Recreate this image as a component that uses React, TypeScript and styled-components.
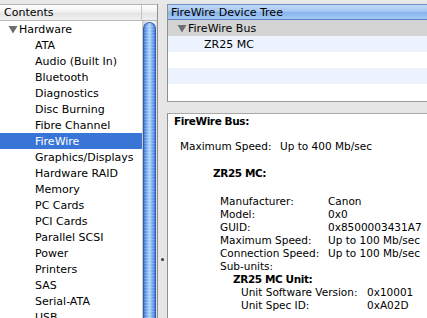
import styled, { createGlobalStyle } from "styled-components";

const GlobalStyle = createGlobalStyle`
    html, body {
        margin : 0;
        padding : 0;
        background : #e8e8e8;
        overflow : hidden;
    }
    body {
        font-family : 'DejaVu Sans', 'Liberation Sans', sans-serif;
        font-size : 11px;
        color : #000;
    }
`

const hardware = [
    'ATA', 'Audio (Built In)', 'Bluetooth', 'Diagnostics', 'Disc Burning',
    'Fibre Channel', 'FireWire', 'Graphics/Displays', 'Hardware RAID', 'Memory',
    'PC Cards', 'PCI Cards', 'Parallel SCSI', 'Power', 'Printers', 'SAS',
    'Serial-ATA', 'USB',
];

const deviceFields = [
    ['Manufacturer:', 'Canon'],
    ['Model:', '0x0'],
    ['GUID:', '0x8500003431A7'],
    ['Maximum Speed:', 'Up to 100 Mb/sec'],
    ['Connection Speed:', 'Up to 100 Mb/sec'],
];

const unitFields = [
    ['Unit Software Version:', '0x10001'],
    ['Unit Spec ID:', '0xA02D'],
];

const Triangle = () => (
    <svg width = "10" height = "9" viewBox = "0 0 10 9">
        <polygon points = "0.5,1 9.5,1 5,8.5" fill = "#6e6e6e" />
    </svg>
);

const App = () => {
    return (
        <StWindow>
            <GlobalStyle />
            <StLeftPane>
                <StHeader>
                    <StHeaderCell>Contents</StHeaderCell>
                    <StHeaderFill />
                </StHeader>
                <StLeftBody>
                    <StList>
                        <StRow>
                            <StDisclosure><Triangle /></StDisclosure>
                            Hardware
                        </StRow>
                        {hardware.map((item) => (
                            <StRow key = {item} selected = {item === 'FireWire'} indent = {35}>
                                {item}
                            </StRow>
                        ))}
                    </StList>
                    <StScrollTrack>
                        <StScrollThumb />
                    </StScrollTrack>
                </StLeftBody>
            </StLeftPane>
            <StVSplitter>
                <StGrip />
            </StVSplitter>
            <StRightPane>
                <StTreeBox>
                    <StTreeHeader>FireWire Device Tree</StTreeHeader>
                    <StTreeRow tone = "group">
                        <StDisclosure><Triangle /></StDisclosure>
                        FireWire Bus
                    </StTreeRow>
                    <StTreeRow tone = "blue" indent = {36}>ZR25 MC</StTreeRow>
                    <StTreeRow tone = "white" />
                    <StTreeRow tone = "blue" />
                    <StTreeRow tone = "white" />
                </StTreeBox>
                <StHSplitter />
                <StDetailBox>
                    <StTitle>FireWire Bus:</StTitle>
                    <StLine indent = {6} gap = {12}>
                        <StLabel width = {100}>Maximum Speed:</StLabel>
                        <span>Up to 400 Mb/sec</span>
                    </StLine>
                    <StTitle indent = {39} gap = {14}>ZR25 MC:</StTitle>
                    <StFieldGroup indent = {46} gap = {15}>
                        {deviceFields.map(([label, value]) => (
                            <StLine key = {label}>
                                <StLabel width = {108}>{label}</StLabel>
                                <span>{value}</span>
                            </StLine>
                        ))}
                        <StLine>Sub-units:</StLine>
                        <StTitle indent = {13}>ZR25 MC Unit:</StTitle>
                        {unitFields.map(([label, value]) => (
                            <StLine key = {label} indent = {21}>
                                <StLabel width = {126}>{label}</StLabel>
                                <span>{value}</span>
                            </StLine>
                        ))}
                    </StFieldGroup>
                </StDetailBox>
            </StRightPane>
        </StWindow>
    );
};

export default App;

const StWindow = styled.div`
    display : flex;
    width : 427px;
    height : 318px;
    box-sizing : border-box;
    padding-top : 4px;
    overflow : hidden;
`

const StLeftPane = styled.div`
    display : flex;
    flex-direction : column;
    width : 157px;
    flex-shrink : 0;
    background : #fff;
    border-right : 1px solid #8e8e8e;
`

const StHeader = styled.div`
    display : flex;
    height : 17px;
    flex-shrink : 0;
    box-sizing : border-box;
    border-top : 1px solid #b4b4b4;
    border-bottom : 1px solid #b8b8b8;
    background : linear-gradient(#ffffff 0%, #f1f1f1 45%, #e4e4e4 55%, #f0f0f0 100%);
`

const StHeaderCell = styled.div`
    width : 142px;
    box-sizing : border-box;
    padding-left : 4px;
    line-height : 15px;
    border-right : 1px solid #c4c4c4;
`

const StHeaderFill = styled.div`
    flex : 1;
`

const StLeftBody = styled.div`
    display : flex;
    flex : 1;
    min-height : 0;
`

const StList = styled.div`
    width : 142px;
    overflow : hidden;
`

const StRow = styled.div<{selected? : boolean, indent? : number}>`
    display : flex;
    align-items : center;
    height : 16px;
    padding-left : ${({indent}) => indent ?? 8}px;
    white-space : nowrap;
    background : ${({selected}) => selected ? '#3875d7' : 'transparent'};
    color : ${({selected}) => selected ? '#fff' : '#000'};
`

const StDisclosure = styled.span`
    display : inline-flex;
    width : 11px;
`

const StScrollTrack = styled.div`
    width : 15px;
    flex-shrink : 0;
    box-sizing : border-box;
    padding : 1px 1px 0 1px;
    background : linear-gradient(to right, #c9c9c9, #ececec 30%, #f7f7f7 70%, #dedede);
`

const StScrollThumb = styled.div`
    height : 100%;
    border-radius : 7px 7px 0 0;
    border : 1px solid #2f5eae;
    border-bottom : none;
    box-sizing : border-box;
    background :
        repeating-linear-gradient(rgba(255, 255, 255, 0.18) 0px, rgba(255, 255, 255, 0.18) 1px, transparent 1px, transparent 3px),
        linear-gradient(to right, #3f78d4 0%, #79acef 25%, #b0d4fa 50%, #79acef 75%, #3f78d4 100%);
`

const StVSplitter = styled.div`
    position : relative;
    width : 9px;
    flex-shrink : 0;
    background : #e6e6e6;
`

const StGrip = styled.div`
    position : absolute;
    left : 3px;
    top : 254px;
    width : 3px;
    height : 3px;
    border-radius : 50%;
    background : #3a3a3a;
`

const StRightPane = styled.div`
    display : flex;
    flex-direction : column;
    flex : 1;
`

const StTreeBox = styled.div`
    display : flex;
    flex-direction : column;
    height : 97px;
    flex-shrink : 0;
    background : #fff;
    border-left : 1px solid #8e8e8e;
    border-bottom : 1px solid #9a9a9a;
    overflow : hidden;
`

const StTreeHeader = styled.div`
    height : 16px;
    flex-shrink : 0;
    box-sizing : border-box;
    padding-left : 3px;
    line-height : 15px;
    border-top : 1px solid #6f8fc7;
    border-bottom : 1px solid #5a7fc0;
    background : linear-gradient(#c3dbf7 0%, #a5c7f1 45%, #87b3ec 55%, #a7cbf5 100%);
`

const rowTones = {
    group : '#d4d4d4',
    blue : '#edf3fe',
    white : '#ffffff',
}

const StTreeRow = styled.div<{tone : keyof typeof rowTones, indent? : number}>`
    display : flex;
    align-items : center;
    height : 16px;
    flex-shrink : 0;
    padding-left : ${({indent}) => indent ?? 9}px;
    white-space : nowrap;
    background : ${({tone}) => rowTones[tone]};
`

const StHSplitter = styled.div`
    height : 11px;
    flex-shrink : 0;
    background : #e6e6e6;
    border-bottom : 1px solid #a8a8a8;
`

const StDetailBox = styled.div`
    flex : 1;
    background : #fff;
    border-left : 1px solid #8e8e8e;
    padding : 1px 0 0 6px;
    overflow : hidden;
    white-space : nowrap;
    font-size : 10.5px;
`

const StTitle = styled.div<{indent? : number, gap? : number}>`
    font-weight : bold;
    letter-spacing : -0.4px;
    line-height : 13px;
    margin-left : ${({indent}) => indent ?? 0}px;
    margin-top : ${({gap}) => gap ?? 0}px;
`

const StLine = styled.div<{indent? : number, gap? : number}>`
    display : flex;
    line-height : 13px;
    margin-left : ${({indent}) => indent ?? 0}px;
    margin-top : ${({gap}) => gap ?? 0}px;
`

const StFieldGroup = styled.div<{indent : number, gap : number}>`
    margin-left : ${({indent}) => indent}px;
    margin-top : ${({gap}) => gap}px;
`

const StLabel = styled.span<{width : number}>`
    width : ${({width}) => width}px;
    flex-shrink : 0;
`
